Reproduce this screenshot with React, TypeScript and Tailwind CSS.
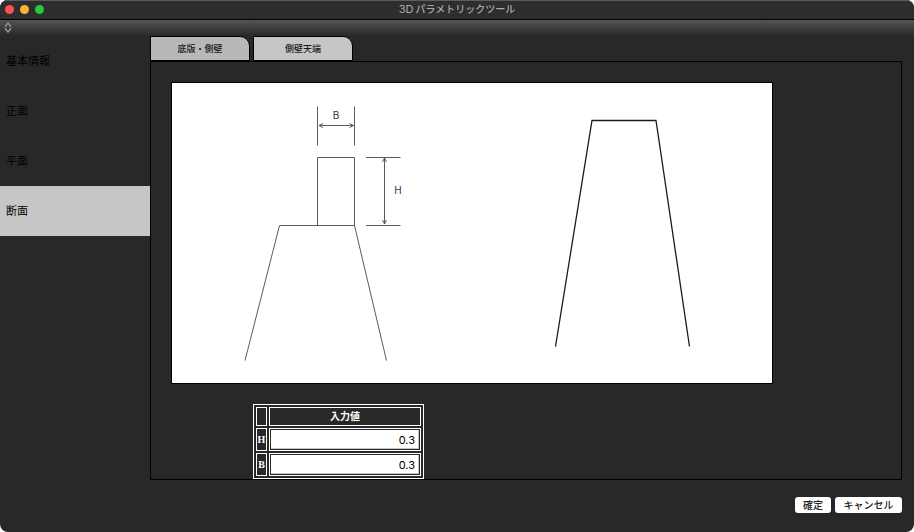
import React, { useState } from "react";

const menuItems = ["基本情報", "正面", "平面", "断面"];
const tabItems = ["底版・側壁", "側壁天端"];

function SectionDrawing() {
  return (
    <svg
      viewBox="0 0 600 300"
      className="block w-full bg-white"
      fill="none"
      role="img"
      aria-label="側壁天端の断面図"
    >
      {/* Side wall with its top block */}
      <g stroke="#4a4a4a" strokeWidth="0.9">
        <path d="M145.5 23.5V62.5M182.5 23.5V62.5" />
        <path d="M147 42.5H181" />
        <path d="M151 40.5L147 42.5L151 44.5M177.5 40.5L181.5 42.5L177.5 44.5" />
        <path d="M145.5 142.5V74.5H182.5V142.5" />
        <path d="M194 74.5H228.5M194 142.5H228.5" />
        <path d="M212.5 75V141" />
        <path d="M210.5 79L212.5 75L214.5 79M210.5 137L212.5 141L214.5 137" />
        <path d="M73 277.5L107.5 142.5H182.5L214.5 277.5" />
      </g>
      <g fill="#333333" fontSize="10" textAnchor="middle" className="font-[Inter,sans-serif]">
        <text x="164" y="36">B</text>
        <text x="226" y="111">H</text>
      </g>

      {/* Finished outline */}
      <path d="M383.5 263.5L420 37.5H484L517.5 263.5" stroke="#1c1c1c" strokeWidth="1.3" />
    </svg>
  );
}

export default function App() {
  const [menu, setMenu] = useState("断面");
  const [tab, setTab] = useState("側壁天端");
  const [values, setValues] = useState<Record<string, string>>({ H: "0.3", B: "0.3" });

  return (
    <div className="bg-white font-['Liberation_Sans','Noto_Sans_CJK_JP',sans-serif]">
      <div className="flex min-h-screen flex-col overflow-hidden rounded-lg bg-[#282828]">
        {/* Title bar */}
        <header className="grid h-5 grid-cols-[1fr_auto_1fr] items-center border-t border-b border-t-[#5c5e5d] border-b-black bg-[#2e2e2e]">
          <div className="flex gap-[6px] pb-px pl-[5px]">
            <button type="button" aria-label="閉じる" className="size-[9px] rounded-full bg-[#ff5055]" />
            <button type="button" aria-label="しまう" className="size-[9px] rounded-full bg-[#fdb235]" />
            <button type="button" aria-label="拡大" className="size-[9px] rounded-full bg-[#28c840]" />
          </div>
          <h1 className="flex items-center gap-[2px] pb-px text-[10px] leading-none font-medium text-[#a9a9a9]">
            <span className="font-[Inter,sans-serif] text-[11px] font-normal">3D</span>
            <span>パラメトリックツール</span>
          </h1>
        </header>

        <div className="flex h-4 items-start bg-linear-to-b from-[#555555] to-[#282828] pt-[2px] pl-1">
          <button type="button" aria-label="表示の切り替え">
            <svg viewBox="0 0 8 11" className="block h-[11px] w-2" fill="none" stroke="#919191" strokeWidth="1.5">
              <path d="M1 4.8L4 1L7 4.8M1 6.2L4 10L7 6.2" />
            </svg>
          </button>
        </div>

        <div className="flex flex-1">
          <nav className="w-[150px] shrink-0">
            {menuItems.map((item) => (
              <button
                key={item}
                type="button"
                onClick={() => setMenu(item)}
                className={
                  item === menu
                    ? "block h-[50px] w-full bg-[#c6c6c6] pl-[6px] text-left text-[11px] text-black"
                    : "block h-[50px] w-full pl-[6px] text-left text-[11px] text-black"
                }
              >
                {item}
              </button>
            ))}
          </nav>

          <main className="min-w-0 flex-1 pr-3">
            <div className="flex gap-[3px]" role="tablist">
              {tabItems.map((item) => (
                <button
                  key={item}
                  type="button"
                  role="tab"
                  aria-selected={item === tab}
                  onClick={() => setTab(item)}
                  className={
                    item === tab
                      ? "h-[25px] w-[100px] rounded-tr-[10px] border border-black bg-[#c6c6c6] pt-[2px] text-[9px] font-medium text-[#1a1a1a]"
                      : "h-[25px] w-[100px] rounded-tr-[10px] border border-black bg-[#b8b8b8] pt-[2px] text-[9px] font-medium text-[#1a1a1a]"
                  }
                >
                  {item}
                </button>
              ))}
            </div>

            <section className="border border-black pt-5">
              <div className="mx-5 max-w-[602px] border border-black">
                <SectionDrawing />
              </div>

              <table className="mt-5 ml-[102px] w-[171px] border-separate border-spacing-[2px] border border-white font-['Liberation_Serif','Noto_Sans_CJK_JP',serif] text-[10px] leading-[15px] text-white">
                <thead>
                  <tr>
                    <td className="w-[11px] border border-white p-px" />
                    <th className="border border-white p-px font-bold">入力値</th>
                  </tr>
                </thead>
                <tbody>
                  {["H", "B"].map((name) => (
                    <tr key={name}>
                      <th className="border border-white p-0 font-bold">
                        <label htmlFor={`value-${name}`}>{name}</label>
                      </th>
                      <td className="border border-white p-px">
                        <input
                          id={`value-${name}`}
                          type="text"
                          value={values[name]}
                          onChange={(e) => setValues({ ...values, [name]: e.target.value })}
                          className="block h-[19px] w-full border-r border-b border-[#c4c4c4] bg-white pt-px pr-[3px] text-right font-[Inter,sans-serif] text-[11px] text-black"
                        />
                      </td>
                    </tr>
                  ))}
                </tbody>
              </table>
            </section>

            <div className="flex justify-end gap-1 pt-[17px] pb-[19px]">
              <button type="button" className="h-4 rounded-[3px] bg-white px-2 pt-px text-[10px] leading-none font-medium text-[#222222]">
                確定
              </button>
              <button type="button" className="h-4 w-[67px] rounded-[3px] bg-white pt-px text-[10px] leading-none font-medium text-[#222222]">
                キャンセル
              </button>
            </div>
          </main>
        </div>
      </div>
    </div>
  );
}
